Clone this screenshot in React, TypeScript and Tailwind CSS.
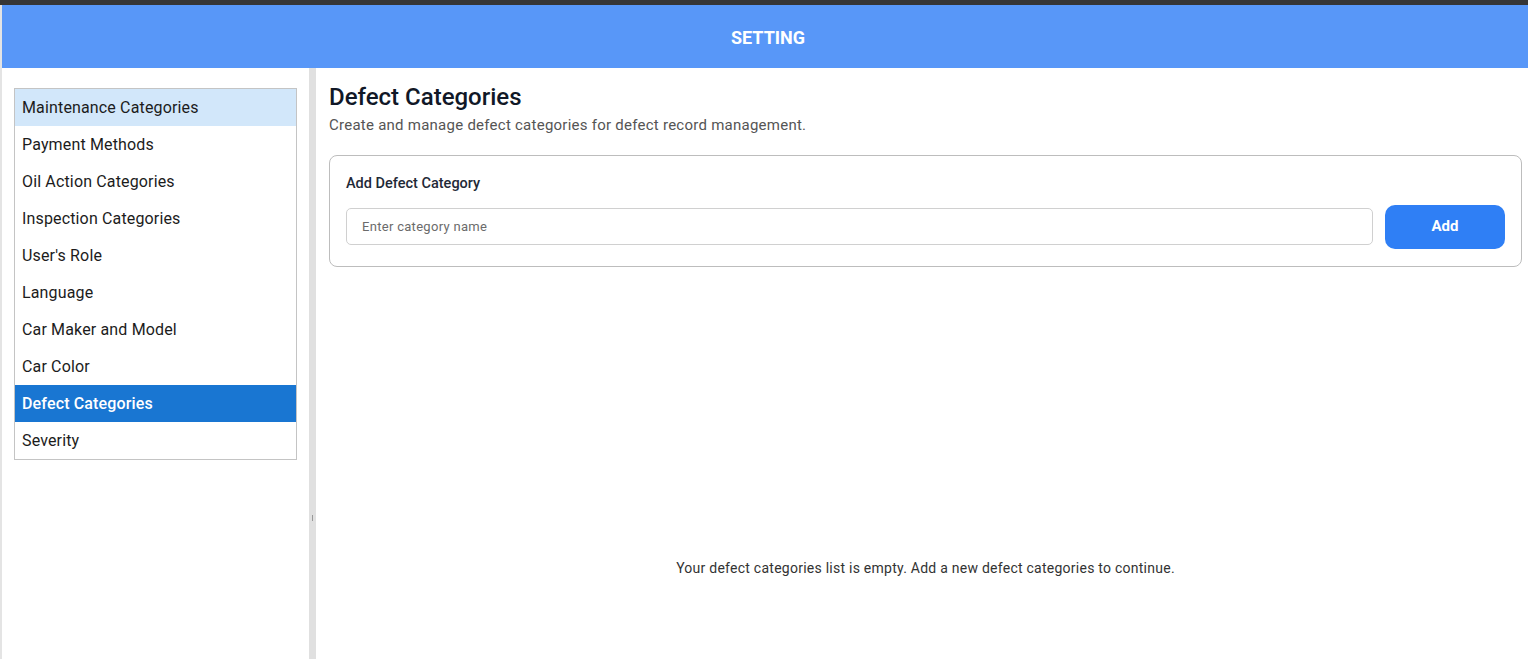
import { useState } from 'react';

const ITEMS = [
  'Maintenance Categories',
  'Payment Methods',
  'Oil Action Categories',
  'Inspection Categories',
  "User's Role",
  'Language',
  'Car Maker and Model',
  'Car Color',
  'Defect Categories',
  'Severity',
];

export default function App() {
  const [active, setActive] = useState('Defect Categories');
  const [name, setName] = useState('');

  return (
    <div className="flex h-[659px] w-full flex-col overflow-hidden bg-[#e4e4e4] font-['Roboto',sans-serif]">
      {/* Window top strip */}
      <div className="h-[5px] shrink-0 bg-[#363636]" />

      <div className="flex min-h-0 flex-1 flex-col pl-[2px]">
        {/* Header */}
        <header className="flex h-[63px] shrink-0 items-center justify-center bg-[#5897f8] pl-[6px] pt-[2px]">
          <h1 className="text-[18px] font-bold text-white">SETTING</h1>
        </header>

        <div className="flex min-h-0 flex-1">
          {/* Sidebar */}
          <aside className="w-[307px] shrink-0 bg-white pl-[12px] pt-[20px]">
            <ul className="w-[283px] border border-[#c4c4c4]">
              {ITEMS.map((item, i) => {
                const selected = item === active;
                const hover = i === 0 && !selected;
                return (
                  <li
                    key={item}
                    onClick={() => setActive(item)}
                    className={`flex h-[37px] cursor-pointer items-center px-[7px] text-[16px] tracking-[0.15px] ${
                      selected
                        ? 'bg-[#1976d2] font-medium text-white'
                        : hover
                          ? 'bg-[#d2e7fa] text-[#1c1c1c]'
                          : 'text-[#1c1c1c]'
                    }`}
                  >
                    {item}
                  </li>
                );
              })}
            </ul>
          </aside>

          {/* Resize divider */}
          <div className="flex w-[7px] shrink-0 items-center justify-center bg-[#e0e0e0] pt-[309px]">
            <div className="h-[6px] w-px bg-[#999]" />
          </div>

          {/* Main */}
          <main className="flex min-w-0 flex-1 flex-col bg-white pl-[13px] pr-[6px] pt-[15px]">
            <h2 className="text-[24px] font-medium leading-[28px] text-[#111827]">Defect Categories</h2>
            <p className="mt-[3px] text-[15px] tracking-[0.25px] text-[#555]">
              Create and manage defect categories for defect record management.
            </p>

            <section className="mt-[18px] rounded-[8px] border border-[#bdbdbd] px-[16px] pb-[17px] pt-[19px]">
              <h3 className="text-[14.5px] font-medium leading-[18px] text-[#1f2937]">Add Defect Category</h3>
              <div className="mt-[12px] flex items-center gap-[12px]">
                <input
                  value={name}
                  onChange={(e) => setName(e.target.value)}
                  placeholder="Enter category name"
                  className="h-[37px] min-w-0 flex-1 rounded-[5px] border border-[#d0d0d0] px-[15px] text-[13px] tracking-[0.3px] text-[#333] outline-none placeholder:text-[#6b6b6b]"
                />
                <button className="h-[44px] w-[120px] shrink-0 rounded-[10px] bg-[#2f7ff5] text-[15px] font-bold text-white">
                  Add
                </button>
              </div>
            </section>

            <div className="flex flex-1 items-start justify-center pt-[291px]">
              <p className="text-[14px] tracking-[0.25px] text-[#333]">
                Your defect categories list is empty. Add a new defect categories to continue.
              </p>
            </div>
          </main>
        </div>
      </div>
    </div>
  );
}
